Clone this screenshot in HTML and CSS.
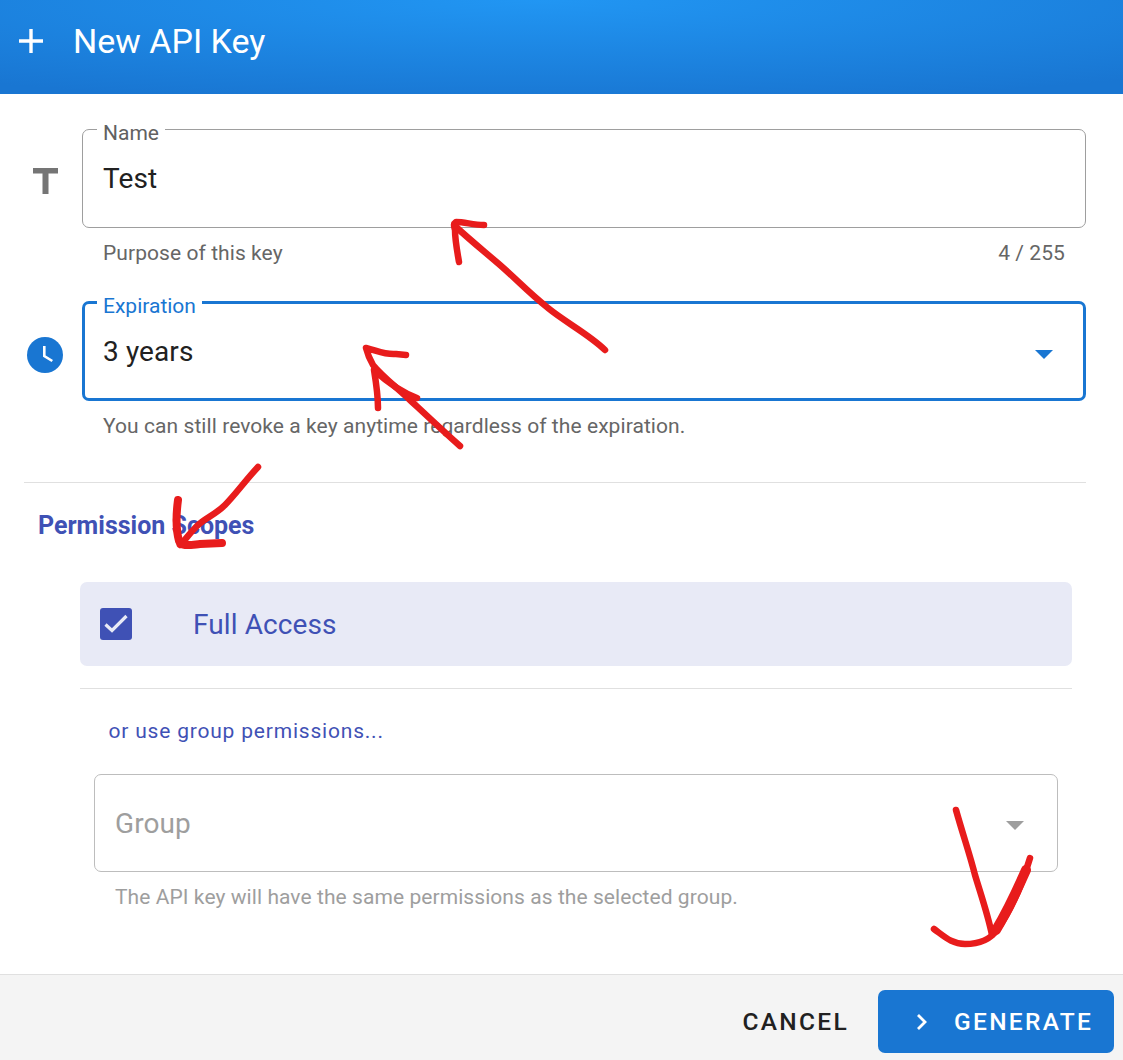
FILE: index.html
```html
<!DOCTYPE html>
<html lang="en">
<head>
<meta charset="utf-8">
<title>New API Key</title>
<link rel="stylesheet" href="styles.css">
</head>
<body>
<div class="dialog">
  <header class="header">
    <svg class="plus" viewBox="0 0 26 26" aria-hidden="true"><path d="M13 1v24M1 13h24"/></svg>
    <h1 class="title">New API Key</h1>
  </header>

  <main class="content">
    <div class="field-row name-row">
      <div class="field-icon">
        <svg class="icon-t" viewBox="0 0 25 26" aria-hidden="true"><path d="M0 0h25v5.500H15.500V26h-6V5.500H0z"/></svg>
      </div>
      <div class="field-main">
        <div class="field">
          <span class="field-label">Name</span>
          <span class="field-value">Test</span>
        </div>
        <div class="hint-row"><span>Purpose of this key</span><span>4 / 255</span></div>
      </div>
    </div>

    <div class="field-row exp-row">
      <div class="field-icon">
        <svg class="icon-clock" viewBox="0 0 36 36" aria-hidden="true"><circle cx="18" cy="18" r="18"/><path d="M17.300 9v10l8 5"/></svg>
      </div>
      <div class="field-main">
        <div class="field focused">
          <span class="field-label">Expiration</span>
          <span class="field-value">3 years</span>
          <span class="caret"></span>
        </div>
        <div class="hint-row"><span>You can still revoke a key anytime regardless of the expiration.</span></div>
      </div>
    </div>

    <hr class="divider top-divider">
    <h2 class="scopes-title">Permission Scopes</h2>

    <div class="scopes">
      <div class="full-access">
        <svg class="checkbox" viewBox="0 0 32 32" aria-hidden="true"><rect width="32" height="32" rx="3"/><path d="M5.500 16.500l6.500 6L26.500 8"/></svg>
        <span class="full-label">Full Access</span>
      </div>
      <hr class="divider scope-divider">
      <p class="or-use">or use group permissions...</p>
      <div class="group-block">
        <div class="field group">
          <span class="field-value">Group</span>
          <span class="caret"></span>
        </div>
        <div class="hint-row"><span>The API key will have the same permissions as the selected group.</span></div>
      </div>
    </div>
  </main>

  <footer class="footer">
    <button class="btn cancel" type="button">CANCEL</button>
    <button class="btn generate" type="button">
      <svg class="chev" viewBox="0 0 12 18" aria-hidden="true"><path d="M2 2l7 7-7 7"/></svg>
      <span>GENERATE</span>
    </button>
  </footer>

  <svg class="scribbles" viewBox="0 0 1123 1060" aria-hidden="true">
    <path d="M605 350C590 335 565 322 548 308C530 294 515 278 500 265C485 252 470 240 455 226"/>
    <path d="M459 262C457 250 455 240 455 230C454 226 453 224 456 222C465 222 473 225 484 225"/>
    <path d="M460 446C443 431 425 414 410 400C395 386 382 376 373 365C369 358 367 352 366 348C378 351 385 355 396 354L406 355"/>
    <path d="M378 408C378 395 376 382 374 370C385 380 400 392 417 398"/>
    <path d="M258 467C245 481 235 495 225 505C215 515 205 518 197 526C190 533 185 540 180 545"/>
    <path class="mid" d="M178 500C176 515 176 530 179 541C181 547 190 545 200 544L222 543"/>
    <path d="M956 810C963 835 970 855 975 875C981 895 988 915 992 935"/>
    <path d="M934 929C945 937 952 944 965 944C980 944 990 940 997 930C1010 912 1022 885 1030 858"/>
    <path class="thick" d="M996 930C1005 915 1015 895 1026 870"/>
  </svg>
</div>
</body>
</html>
```
FILE: styles.css
```css
* { box-sizing: border-box; }

html, body { margin: 0; padding: 0; }

body {
  font-family: Roboto, "Liberation Sans", sans-serif;
  background: #fff;
}

.dialog {
  position: relative;
  width: 1123px;
  height: 1060px;
  overflow: hidden;
  display: flex;
  flex-direction: column;
}

.header {
  height: 94px;
  flex: none;
  display: flex;
  align-items: center;
  gap: 29px;
  padding: 0 0 12px 18px;
  color: #fff;
  background: radial-gradient(ellipse 900px 105px at 48% 0, #2196f3 0%, #1976d2 100%);
}

.plus {
  width: 26px;
  height: 26px;
  fill: none;
  stroke: #fff;
  stroke-width: 3.4;
}

.title {
  margin: 0;
  font-size: 34px;
  font-weight: 400;
  line-height: 1;
}

.content {
  flex: 1;
  padding-top: 35px;
}

.field-row {
  display: flex;
  padding-right: 37px;
}

.field-icon {
  width: 82px;
  flex: none;
  display: flex;
  align-items: center;
  justify-content: center;
  padding-left: 8px;
}

.name-row .field-icon { height: 104px; }
.exp-row .field-icon { height: 108px; }

.field-main { flex: 1; min-width: 0; }

.exp-row { margin-top: 35px; }

.icon-t { width: 25px; height: 26px; fill: #757575; }

.icon-clock { width: 36px; height: 36px; }
.icon-clock circle { fill: #1976d2; }
.icon-clock path { fill: none; stroke: #fff; stroke-width: 2.6; }

.field {
  position: relative;
  height: 99px;
  border: 1px solid #9e9e9e;
  border-radius: 7px;
  padding: 35px 20px 0;
  display: flex;
  align-items: flex-start;
  justify-content: space-between;
}

.field-label {
  position: absolute;
  left: 14px;
  top: -12px;
  padding: 0 6px;
  background: #fff;
  color: #616161;
  font-size: 21px;
  line-height: 30px;
}

.field-value {
  font-size: 28px;
  line-height: 28px;
  letter-spacing: 0.1px;
  color: #212121;
}

.focused {
  height: 100px;
  border: 3px solid #1976d2;
  padding: 34px 18px 0;
}

.focused .field-label {
  left: 12px;
  top: -13px;
  color: #1976d2;
}

.caret {
  position: absolute;
  right: 30px;
  top: 46px;
  width: 0;
  height: 0;
  border-left: 9px solid transparent;
  border-right: 9px solid transparent;
  border-top: 9px solid #1976d2;
}

.hint-row {
  display: flex;
  justify-content: space-between;
  padding: 0 21px;
  margin-top: 13px;
  font-size: 21px;
  line-height: 25px;
  color: #666;
  letter-spacing: 0.07px;
}

.divider {
  border: 0;
  height: 1px;
  margin: 0;
  background: #e0e0e0;
}

.top-divider { margin: 43px 37px 0 24px; }

.scopes-title {
  margin: 29px 0 0 38px;
  font-size: 25px;
  line-height: 28px;
  font-weight: 700;
  color: #3f51b5;
}

.scopes { padding: 42px 51px 0 80px; }

.full-access {
  height: 84px;
  display: flex;
  align-items: center;
  padding-left: 20px;
  gap: 61px;
  background: #e8eaf6;
  border-radius: 7px;
  color: #3f51b5;
}

.checkbox { width: 32px; height: 32px; }
.checkbox rect { fill: #3f51b5; }
.checkbox path { fill: none; stroke: #e8eaf6; stroke-width: 3.2; }

.full-label {
  font-size: 28px;
  line-height: 32px;
  letter-spacing: 0.1px;
  padding-top: 2px;
}

.scope-divider { margin-top: 22px; }

.or-use {
  margin: 29px 0 0 28.500px;
  font-size: 21px;
  line-height: 26px;
  letter-spacing: 0.8px;
  color: #3f51b5;
}

.group-block { margin: 30px 14px 0; }

.group {
  height: 98px;
  border-color: #bdbdbd;
  padding-left: 21px;
}

.group .field-value { color: #9e9e9e; margin-left: -1px; }
.group .caret { border-top-color: #9e9e9e; right: 33px; }
.group-block .hint-row { color: #9e9e9e; }

.footer {
  flex: none;
  height: 86px;
  border-top: 1px solid #e0e0e0;
  background: #f4f4f4;
  display: flex;
  align-items: flex-start;
  justify-content: flex-end;
  padding: 15px 9px 0 0;
}

.btn {
  height: 63px;
  border: 0;
  border-radius: 7px;
  font-family: inherit;
  font-size: 24.5px;
  font-weight: 500;
  letter-spacing: 2.3px;
  background: transparent;
}

.cancel {
  color: #212121;
  padding: 0 29px 0 0;
}

.generate {
  width: 236px;
  display: flex;
  align-items: center;
  padding: 0 0 0 38px;
  gap: 26px;
  background: #1976d2;
  color: #fff;
}

.chev {
  width: 12px;
  height: 18px;
  fill: none;
  stroke: #fff;
  stroke-width: 2.8;
}

.scribbles {
  position: absolute;
  inset: 0;
  width: 1123px;
  height: 1060px;
  fill: none;
  stroke: #e81c1c;
  stroke-width: 6.5;
  stroke-linecap: round;
  stroke-linejoin: round;
  pointer-events: none;
}

.scribbles .mid { stroke-width: 8; }
.scribbles .thick { stroke-width: 10; }
```
